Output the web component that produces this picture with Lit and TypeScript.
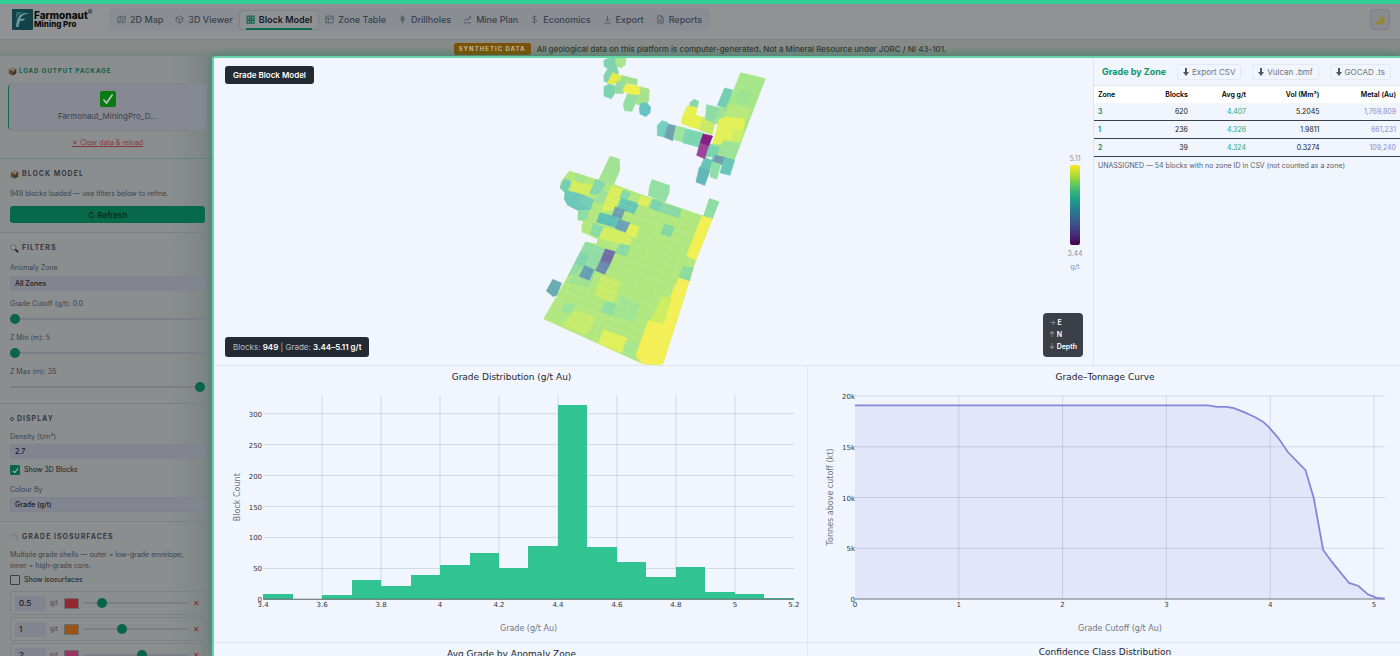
import { LitElement, html, svg, css } from "lit";
import { customElement, property, state } from "lit/decorators.js";
import { classMap } from "lit/directives/class-map.js";

const icons: Record<string, unknown> = {
  map: svg`<path d="M1.5 4v10l4.3-2 4.4 2 4.3-2V2l-4.3 2-4.4-2zM5.8 2v10M10.2 4v10"/>`,
  cube: svg`<path d="M8 1.5l6 3.3v6.4l-6 3.3-6-3.3V4.800zM2 4.800l6 3.400 6-3.400M8 8.200v6.300"/>`,
  grid: svg`<path d="M2 2h5v5H2zM9.500 2h5v5h-5zM2 9.500h5v5H2zM9.500 9.500h5v5h-5z"/>`,
  table: svg`<path d="M1.500 2h13v12h-13zM1.500 6h13M6 6v8"/>`,
  drill: svg`<path d="M8 1v14M5.500 3.500h5M5 6.500h6M5.500 9.500h5M6.500 12.500h3M5.500 3.500v6M10.500 3.500v6"/>`,
  plan: svg`<path d="M1.500 14h13M2.500 10.500l3.500-4 3 2.500 4.500-6M10.500 3h3v3"/>`,
  dollar: svg`<path d="M8 1v14M11.500 4.500C11 3.300 9.700 2.800 8 2.800c-2 0-3.500.9-3.500 2.500 0 3.500 7.200 1.800 7.200 5.300 0 1.700-1.700 2.600-3.700 2.600s-3.400-.8-3.800-2.200"/>`,
  export: svg`<path d="M8 1.500v9M4.500 7.500L8 11l3.500-3.500M2 14.300h12"/>`,
  report: svg`<path d="M3 1.500h6.500L13 5v9.500H3zM9.500 1.500V5H13M5.500 8.500h5M5.500 11.300h5"/>`,
};

const tabs = [
  ["map", "2D Map"], ["cube", "3D Viewer"], ["grid", "Block Model"], ["table", "Zone Table"],
  ["drill", "Drillholes"], ["plan", "Mine Plan"], ["dollar", "Economics"], ["export", "Export"], ["report", "Reports"],
];

const boxIcon = html`<svg class="emoji" viewBox="0 0 16 16" aria-hidden="true">
  <path d="M8 1l6.500 2.800v8.400L8 15l-6.500-2.800V3.800z" fill="#5d4a37"/><path d="M8 1l6.500 2.800L8 6.600 1.500 3.800z" fill="#83705a"/>
  <path d="M8 6.600V15l6.500-2.800V3.800z" fill="#46372a"/><path d="M4.500 2.500l6.500 2.800v3l-1.500.6V6L3.200 3.100z" fill="#a49a89"/></svg>`;

@customElement("site-header")
class SiteHeader extends LitElement {
  @state() active = "Block Model";
  static styles = css`
    :host { display: block; font-family: Inter, sans-serif; color: #2d3440; }
    .bar { display: flex; align-items: center; height: 31px; padding: 0 10px 4px 12px; border-top: 4px solid #2fd095; border-bottom: 1px solid #7f8284; background: #909293; box-sizing: content-box; }
    .brand { display: flex; align-items: center; gap: 1px; color: #0b0d0e; width: 97px; text-decoration: none; }
    .mark { width: 21px; height: 21px; flex: none; }
    .name { font-weight: 800; font-size: 10px; line-height: 10px; }
    .name span { display: block; white-space: nowrap; }
    .name .sub { font-size: 8px; line-height: 9px; }
    .name sup { font-size: 7px; line-height: 0; }
    nav { display: flex; align-items: center; height: 23px; padding: 0 2px; border-radius: 5px; background: #8a8d92; }
    .tab { display: flex; align-items: center; gap: 4px; height: 20px; padding: 0 6px; border: 1px solid transparent; border-width: 1px 0; border-radius: 4px; background: none; color: #394150; font: 500 9px/12px Inter, sans-serif; position: relative; white-space: nowrap; }
    .tab svg { width: 9px; height: 9px; fill: none; stroke: #4b5462; stroke-width: 1.400; }
    .tab.on { background: #8f9295; border: 1px solid #808386; color: #15191c; font-weight: 600; }
    .tab.on svg { stroke: #0b6649; stroke-width: 1.900; }
    .tab.on::after { content: ""; position: absolute; left: 6px; right: 6px; bottom: -1px; height: 2px; background: #0d6a4c; }
    .theme { margin-left: auto; width: 20px; height: 21px; padding: 0; display: grid; place-items: center; border: 1px solid #7f8188; border-radius: 4px; background: #898b90; }
    .theme svg { width: 10px; height: 10px; }
    .notice { display: flex; align-items: center; justify-content: center; gap: 6px; height: 17px; color: #33382a; background: linear-gradient(#868a89 40%, #76867f); font: 500 8px/12px Inter, sans-serif; }
    .badge { padding: 0 5px; border-radius: 2px; background: #7a5208; color: #bfae86; font-size: 6px; font-weight: 800; letter-spacing: 1px; }
  `;
  render() {
    return html`<header class="bar">
        <a class="brand" href="#" aria-label="Farmonaut Mining Pro">
          <svg class="mark" viewBox="0 0 21 21"><rect width="21" height="21" rx="1" fill="#12424a"/>
            <path d="M4 18C5 8 7 5 13 4L18 4c-6 1-9 3-9.500 6L13 9.500 12 11.500 8 12C7 15 6.500 17 6.500 18z" fill="#6f9a98"/><path d="M4 3h8C8 4 5.500 6 4 11z" fill="#2f6a6c"/></svg>
          <span class="name"><span>Farmonaut<sup>®</sup></span><span class="sub">Mining Pro</span></span>
        </a>
        <nav aria-label="Views">
          ${tabs.map(([icon, label]) => html`<button class=${classMap({ tab: true, on: label === this.active })} @click=${() => (this.active = label)}>
            <svg viewBox="0 0 16 16" aria-hidden="true">${icons[icon]}</svg>${label}</button>`)}
        </nav>
        <button class="theme" aria-label="Toggle dark mode"><svg viewBox="0 0 16 16"><path d="M9 1a7.500 7.500 0 1 1-8 10.500A8.500 8.500 0 0 0 9 1z" fill="#94872f"/></svg></button>
      </header>
      <div class="notice"><span class="badge">SYNTHETIC DATA</span><span>All geological data on this platform is computer-generated. Not a Mineral Resource under JORC / NI 43-101.</span></div>`;
  }
}

@customElement("control-panel")
class ControlPanel extends LitElement {
  static styles = css`
    :host { display: block; font: 400 7px/12px Inter, sans-serif; color: #3b424c; background: linear-gradient(90deg, #8b8e8f 80%, #7b8483); overflow: hidden; }
    section { padding: 9px 7px 9px 10px; border-bottom: 1px solid #7c8082; }
    section.load { padding: 9px 5px 10px 8px; border-color: #5d8776; }
    section.filters { padding-bottom: 11px; }
    h2 { display: flex; align-items: center; gap: 3px; height: 12px; margin: 0 0 8px; font-size: 7px; line-height: 12px; font-weight: 700; letter-spacing: 1px; color: #343a43; }
    .load h2 { color: #0b5b43; margin-bottom: 6px; font-size: 6px; gap: 2px; }
    .tight h2 { margin-bottom: 6px; }
    .emoji { width: 9px; height: 9px; flex: none; }
    .file { display: flex; flex-direction: column; align-items: center; gap: 3px; padding: 7px 0 8px; border: 1px solid #80848a; border-left: 1px solid #0d6a4c; border-radius: 5px; background: #868992; font-size: 8px; }
    .file svg { width: 16px; height: 16px; }
    .clear { display: block; margin: 7px auto 0; padding: 0; border: 0; background: none; font: 400 7px/10px Inter, sans-serif; color: #8c3737; text-decoration: underline; }
    p { margin: 0; padding-right: 16px; line-height: 11px; }
    .refresh { width: 100%; height: 17px; margin-top: 7px; padding: 0; display: flex; gap: 2px; align-items: center; justify-content: center; border: 0; border-radius: 3px; background: #08694a; color: #02291d; font: 600 8px/12px Inter, sans-serif; }
    label { display: block; }
    .field { width: 100%; box-sizing: border-box; height: 15px; margin: 2px 0 7px; padding: 0 4px; appearance: none; border: 1px solid #7f838b; border-radius: 2px; background: #82858f; color: #171b22; font: 500 7px/12px Inter, sans-serif; display: block; }
    .tight > .field { margin-top: 1px; }
    input[type="range"] { appearance: none; display: block; width: 100%; height: 10px; margin: 4px 0 8px; background: none; }
    input[type="range"]::-webkit-slider-runnable-track { height: 2px; background: #7b7f84; border-radius: 1px; }
    input[type="range"]::-webkit-slider-thumb { appearance: none; width: 10px; height: 10px; margin-top: -4px; border-radius: 50%; background: #086648; }
    section > .field:last-child, section > input[type="range"]:last-child { margin-bottom: 0; }
    .check { display: flex; align-items: center; gap: 4px; color: #171b22; line-height: 12px; }
    .field + .check { margin: -2px 0 8px; }
    p + .check { margin-top: 3px; }
    .check input { appearance: none; display: grid; place-items: center; box-sizing: border-box; width: 10px; height: 10px; margin: 0; border: 1px solid #3c4045; border-radius: 1px; }
    .check input:checked { background: #08664a; border-color: #08664a; }
    .check input:checked::before { content: ""; width: 2px; height: 5px; border: solid #aeb4b2; border-width: 0 1px 1px 0; transform: rotate(40deg); }
    .shells { display: grid; gap: 2px; margin-top: 5px; }
    .shell { display: grid; grid-template-columns: 31px 10px 15px 1fr 8px; align-items: center; gap: 4px; height: 24px; box-sizing: border-box; padding: 0 4px; border: 1px solid #7e8184; border-radius: 3px; font-size: 6px; }
    .shell .field, .shell input[type="range"] { margin: 0; }
    .shell .field { border: 0; font-size: 8px; padding: 0 4px; }
    .shell input[type="color"] { appearance: none; width: 15px; height: 11px; padding: 0; border: 1px solid #6a6e70; background: none; display: block; }
    .shell input[type="color"]::-webkit-color-swatch-wrapper { padding: 0; }
    .shell input[type="color"]::-webkit-color-swatch { border: 0; }
    .shell button { padding: 0; border: 0; background: none; color: #90242a; font: 500 8px/10px Inter, sans-serif; }
  `;
  slider(id: string, label: string, min: number, max: number, value: number) {
    return html`<label for=${id}>${label}</label><input id=${id} type="range" min=${min} max=${max} .value=${String(value)}>`;
  }
  render() {
    const shells = [["0.5", "#94282e", 15], ["1", "#9c5316", 36], ["2", "#963566", 57]];
    return html`
      <section class="load">
        <h2>${boxIcon} LOAD OUTPUT PACKAGE</h2>
        <div class="file"><svg viewBox="0 0 16 16" aria-hidden="true"><rect width="16" height="16" rx="2" fill="#087b13"/><path d="M3.500 8.500l3 3.500L12.500 3.500" fill="none" stroke="#b5c2b7" stroke-width="1.800"/></svg><span>Farmonaut_MiningPro_D...</span></div>
        <button class="clear">✕ Clear data &amp; reload</button>
      </section>
      <section>
        <h2>${boxIcon} BLOCK MODEL</h2>
        <p>949 blocks loaded — use filters below to refine.</p>
        <button class="refresh"><span>↻</span>Refresh</button>
      </section>
      <section class="filters">
        <h2><svg class="emoji" viewBox="0 0 16 16"><circle cx="6" cy="6" r="4.500" fill="#969b9c" stroke="#555b5d" stroke-width="1.500"/><path d="M9.500 9.500l5 5" stroke="#1e2123" stroke-width="3"/></svg> FILTERS</h2>
        <label for="zone">Anomaly Zone</label>
        <select id="zone" class="field"><option>All Zones</option><option>1</option><option>2</option><option>3</option></select>
        ${this.slider("cut", "Grade Cutoff (g/t): 0.0", 0, 5, 0)}
        ${this.slider("zmin", "Z Min (m): 5", 5, 35, 5)}
        ${this.slider("zmax", "Z Max (m): 35", 5, 35, 35)}
      </section>
      <section class="tight">
        <h2><svg width="4" height="6" viewBox="0 0 4 6" fill="none" stroke="#3b4148"><circle cx="2" cy="3" r="1.500"/></svg> DISPLAY</h2>
        <label for="density">Density (t/m³)</label>
        <input id="density" class="field" value="2.7">
        <label class="check"><input type="checkbox" checked>Show 3D Blocks</label>
        <label for="colour">Colour By</label>
        <select id="colour" class="field"><option>Grade (g/t)</option></select>
      </section>
      <section class="tight">
        <h2><svg class="emoji" viewBox="0 0 16 16" fill="none" stroke="#73777a" stroke-width="1.500"><path d="M2 4l5-2 5 2v6l-2 1M2 4v5M7 8l3 3M13 13h2"/></svg> GRADE ISOSURFACES</h2>
        <p>Multiple grade shells — outer = low-grade envelope, inner = high-grade core.</p>
        <label class="check"><input type="checkbox">Show isosurfaces</label>
        <div class="shells">${shells.map(([v, c, p]) => html`<div class="shell">
          <input class="field" aria-label="Shell grade" .value=${v}><span>g/t</span>
          <input type="color" aria-label="Shell colour" .value=${c}>
          <input type="range" aria-label="Shell opacity" min="0" max="100" .value=${String(p)}>
          <button aria-label="Remove shell">✕</button></div>`)}</div>
      </section>`;
  }
}

/* Visible block faces, back to front: fill colour and outline. */
const upperBlocks: [string, string][] = [
  ["#7fd3ae", "222,12 256,0 262,36 248,42 236,40 222,30"], ["#a9e48f", "256,0 288,6 286,26 272,36 258,28"],
  ["#83d2b2", "232,40 262,38 266,50 258,66 238,82 222,76 222,58"], ["#9fe08e", "272,58 322,70 320,88 308,84 280,82 262,84"],
  ["#e4ec4a", "248,50 274,60 262,84 232,82"], ["#7fd4b0", "222,92 238,84 256,90 256,110 244,128 222,120"],
  ["#95dba4", "262,76 288,84 280,112 258,112 256,92"], ["#a8e38c", "330,92 358,100 356,136 340,150 318,144 322,112"],
  ["#92dea3", "296,106 328,116 316,142 306,166 284,164 280,144"], ["#eff04c", "288,84 330,92 328,116 300,114 278,104"],
  ["#66c5c2", "332,142 350,140 362,154 360,170 348,182 330,174 328,158"],
  ["#74cfbe", "382,208 396,194 414,200 404,244 382,238"], ["#6fa3b4", "414,204 438,210 428,254 404,244"],
  ["#9fe3a0", "438,210 466,216 458,258 430,250"], ["#7cd6b0", "466,218 522,232 508,274 458,260"],
  ["#86d8ac", "480,140 492,130 506,136 502,156 478,154"],
  ["#e6f04e", "472,150 500,154 498,178 518,184 508,220 480,212 454,202 456,186"],
  ["#c8ea68", "518,184 540,192 556,196 546,236 508,222"], ["#8edca4", "530,146 572,156 556,204 526,188"],
  ["#74cfb2", "584,96 608,102 600,138 588,158 562,148"], ["#9fe39a", "572,154 592,156 572,206 550,200"],
  ["#a6e68a", "632,50 706,68 612,312 540,286 548,262"], ["#9ae492", "632,104 662,112 650,142 620,134"],
  ["#b8e97c", "594,144 664,160 640,210 590,190"],
  ["#e2f158", "588,182 622,188 640,186 644,204 634,240 610,262 548,264 568,190"],
  ["#cdee66", "612,220 642,226 628,262 600,256"], ["#9ee498", "580,254 632,262 612,312 568,292"],
  ["#7cd6ac", "540,264 568,274 562,302 526,302"], ["#7fc9b0", "550,294 586,304 578,326 544,316"],
  ["#6f9fae", "556,298 584,304 576,326 550,316"], ["#69c6b8", "584,304 614,312 600,358 570,350"],
  ["#66c7b4", "524,304 548,314 538,346 510,336"], ["#90dfa6", "546,318 572,326 560,370 540,362"],
  ["#62b8b8", "508,334 540,344 524,388 498,378"],
  ["#861c84", "520,234 548,240 536,270 510,262"], ["#9c469b", "510,262 536,270 524,308 500,298"],
];
const bodyOutline = "118,-73 206,-45 240,-117 268,-109 270,-75 252,-32 350,4 520,62 538,10 568,20 498,196 478,260 400,505 388,510 340,508 40,372 110,250 166,140 200,146 202,132 156,112 154,92 160,80 142,74 144,48 112,30 102,12 104,-8 90,-20 92,-38 100,-50";
const bodyBlocks: [string, string][] = [
  ["#a0e394", "240,-117 268,-109 270,-75 252,-32 196,-46"], ["#a4e48e", "212,-62 256,-48 248,-30 200,-44"],
  ["#8edca4", "538,10 568,20 548,72 520,62"], ["#76cfb4", "90,-24 104,-48 126,-40 112,-14 96,-6"],
  ["#a8e58a", "140,-66 168,-58 158,-34 132,-44"], ["#d4ed5f", "126,-44 142,-38 156,-34 196,-30 178,2 120,-14"],
  ["#6cc8b8", "106,-14 160,0 190,16 180,44 146,46 112,32 102,12"], ["#84d6ac", "198,-46 226,-36 214,-10 196,-2 178,-4"],
  ["#9ce09a", "214,-14 244,-4 226,30 192,18"], ["#74cdb4", "160,2 190,14 180,40 148,30"],
  ["#8bdca8", "144,48 176,46 170,72 146,76"], ["#d8ef5a", "246,-28 278,-18 254,42 214,50 228,10"],
  ["#82d8aa", "280,-14 302,-6 290,14 270,6"], ["#66c6b6", "274,10 326,26 312,56 264,40"],
  ["#dcef5c", "332,2 362,12 352,36 322,26"], ["#6f9fae", "256,36 284,46 274,72 246,64"],
  ["#5cc0b4", "210,54 246,62 274,74 262,98 200,82"], ["#6a9fb4", "268,74 300,84 286,112 256,100"],
  ["#e2f056", "300,88 328,96 316,128 286,118"], ["#d3ee60", "230,98 290,116 306,134 294,152 200,128 214,104"],
  ["#8adca4", "190,84 220,96 206,128 182,116"], ["#78d3ae", "370,12 396,22 388,50 360,38"],
  ["#88daa4", "396,24 454,42 446,68 388,50"], ["#82d8a4", "404,88 432,96 422,126 392,116"],
  ["#88dba2", "272,146 300,154 290,184 256,174"], ["#90dda4", "166,140 224,162 206,206 188,226 122,240 110,250"],
  ["#80d5aa", "150,172 176,182 162,214 134,204"], ["#a0e292", "160,212 200,222 176,276 110,262"],
  ["#6f6fa6", "226,162 256,170 240,208 210,200"], ["#6b8cb0", "210,200 240,208 224,238 196,226"],
  ["#659fb6", "164,212 192,224 178,256 148,244"], ["#c8ec6a", "214,240 274,262 250,322 194,300"],
  ["#f2f050", "516,64 552,72 498,196 470,182 482,150"], ["#8cdc9e", "460,214 500,222 478,260 448,246"],
  ["#f3ef55", "446,250 482,260 402,510 388,512 340,510 318,480 356,376 388,384 426,294"],
  ["#cdee60", "396,306 424,312 400,386 362,376"], ["#a0e592", "272,300 328,330 316,380 280,370 254,362"],
  ["#8fdfa0", "228,318 258,328 250,362 212,350"], ["#dff05a", "220,404 292,430 280,476 206,446"],
  ["#a6e690", "288,438 324,450 312,490 276,476"], ["#9be39a", "110,322 134,330 124,358 92,344"],
  ["#c6ec6c", "134,344 196,366 170,420 100,392"],
];

@customElement("block-view")
class BlockView extends LitElement {
  static styles = css`
    :host { display: block; position: relative; overflow: hidden; font: 500 8px/12px Inter, sans-serif; }
    .scene { display: block; width: 100%; height: 100%; }
    .chip { position: absolute; left: 11px; padding: 0 8px; border-radius: 3px; background: #242a32; color: #fff; font-weight: 600; line-height: 18px; }
    .name { top: 8px; }
    .stats { bottom: 8px; line-height: 20px; color: #b9bec6; font-weight: 400; }
    .stats b { color: #fff; font-weight: 600; }
    .scale { position: absolute; right: 8px; top: 95px; width: 20px; display: flex; flex-direction: column; align-items: center; color: #8d929c; font-size: 7px; line-height: 12px; font-weight: 400; }
    .ramp { width: 10px; height: 80px; margin-bottom: 3px; border-radius: 2px; background: linear-gradient(#fde725, #a0da39 15%, #4ac16d 28%, #1fa187 42%, #277f8e 55%, #365c8d 70%, #46327e 85%, #440154); }
    .scale span + span { margin-top: 1px; }
    .axes { position: absolute; right: 10px; bottom: 8px; padding: 4px 6px; border-radius: 4px; background: #3a3f48; color: #fff; font-size: 7px; line-height: 12px; font-weight: 600; }
    .axes div { white-space: nowrap; }
    .axes i { font-style: normal; font-weight: 400; color: #a6abb3; }
  `;
  render() {
    const rows = Array.from({ length: 24 }, (_, i) => {
      const t = (i - 4) / 18;
      return svg`<path d="M${40 + 170 * t} ${372 - 417 * t}L${400 + 160 * t} ${520 - 458 * t}"/>`;
    });
    const cols = Array.from({ length: 17 }, (_, i) => {
      const t = (i - 4) / 12;
      return svg`<path d="M${40 + 360 * t} ${372 + 148 * t}L${210 + 350 * t} ${-55 + 110 * t}"/>`;
    });
    const face = ([c, p]: [string, string]) => svg`<polygon fill=${c} stroke=${c} stroke-width="2" stroke-linejoin="round" points=${p}/>`;
    return html`<svg class="scene" viewBox="0 0 879 307" role="img" aria-label="Grade block model">
        <g transform="translate(316 -2) scale(.3333)">${upperBlocks.map(face)}</g>
        <g transform="translate(316 137) scale(.3333)">
          <clipPath id="body"><polygon points=${bodyOutline}/></clipPath>
          <polygon fill="#94dfa3" points="366,-47 420,-29 418,-5 404,24 354,2 358,-28"/>
          <polygon fill="#68adb4" points="68,252 96,264 82,300 70,306 48,288"/>
          <polygon fill="#b1e77f" points=${bodyOutline}/>
          <g clip-path="url(#body)">${bodyBlocks.map(face)}
            <g stroke="#fff" stroke-opacity=".12" stroke-width="2">${rows}${cols}</g></g>
        </g>
      </svg>
      <div class="chip name">Grade Block Model</div>
      <div class="chip stats">Blocks: <b>949</b> | Grade: <b>3.44–5.11 g/t</b></div>
      <div class="scale"><span>5.11</span><div class="ramp"></div><span>3.44</span><span>g/t</span></div>
      <div class="axes"><div><i>→</i> E</div><div><i>↑</i> N</div><div><i>↓</i> Depth</div></div>`;
  }
}

@customElement("zone-table")
class ZoneTable extends LitElement {
  static styles = css`
    :host { display: block; border-left: 1px solid #e0e4ee; font: 400 8px/12px Inter, sans-serif; color: #14171c; min-width: 0; }
    .head { display: flex; align-items: center; justify-content: space-between; height: 28px; padding: 0 9px 0 8px; border-bottom: 1px solid #e2e6ef; box-sizing: border-box; }
    h2 { margin: 0; color: #0f9467; font-size: 9px; font-weight: 700; }
    .head button { height: 16px; padding: 0 5px; border: 1px solid #e4e8f2; border-radius: 3px; background: none; color: #6d737e; font: 400 8px/12px Inter, sans-serif; white-space: nowrap; display: flex; align-items: center; gap: 3px; }
    .head svg { width: 6px; height: 8px; }
    table { width: 100%; border-collapse: collapse; }
    th, td { text-align: right; padding: 3px 4px 2px; line-height: 12px; }
    th { font-weight: 600; font-size: 7px; background: #fff; padding: 3px; padding-right: 4px; color: #000; line-height: 11px; }
    th:first-child, td:first-child { text-align: left; padding-left: 4px; }
    td { border-bottom: 1px solid #3d4047; font-size: 7px; }
    td.zone { color: #12855f; font-weight: 600; }
    td.avg { color: #27a878; }
    td.metal { color: #8d8acb; }
    p { margin: 0; padding: 3px 4px; font-size: 7px; line-height: 12px; color: #5a606b; }
    .c1 { width: 12%; } .c2 { width: 20%; } .c3 { width: 19%; } .c4 { width: 24%; } .c5 { width: 25%; }
  `;
  render() {
    const rows = [["3", "620", "4.407", "5.2045", "1,769,809"], ["1", "236", "4.326", "1.9811", "661,231"], ["2", "39", "4.324", "0.3274", "109,240"]];
    return html`<div class="head"><h2>Grade by Zone</h2>
        ${["Export CSV", "Vulcan .bmf", "GOCAD .ts"].map((t) => html`<button><svg viewBox="0 0 6 8" aria-hidden="true"><path d="M2 0h2v4h2L3 8 0 4h2z" fill="#50565f"/></svg>${t}</button>`)}</div>
      <table><colgroup><col class="c1"><col class="c2"><col class="c3"><col class="c4"><col class="c5"></colgroup>
        <thead><tr><th>Zone</th><th>Blocks</th><th>Avg g/t</th><th>Vol (Mm³)</th><th>Metal (Au)</th></tr></thead>
        <tbody>${rows.map((r) => html`<tr><td class="zone">${r[0]}</td><td>${r[1]}</td><td class="avg">${r[2]}</td><td>${r[3]}</td><td class="metal">${r[4]}</td></tr>`)}</tbody></table>
      <p>UNASSIGNED — 54 blocks with no zone ID in CSV (not counted as a zone)</p>`;
  }
}

@customElement("plot-chart")
class PlotChart extends LitElement {
  @property() kind = "";
  @property() heading = "";
  static styles = css`
    :host { display: block; min-width: 0; font-family: "DejaVu Sans", sans-serif; }
    figure { margin: 0; }
    figcaption { padding: 5px 0 0 2px; text-align: center; font-size: 9px; line-height: 12px; color: #22262f; }
    :host(.low) figcaption { padding-top: 3px; }
    svg { display: block; width: 100%; }
    .tick { font-size: 7px; fill: #33363d; }
    .title { font-size: 8px; fill: #6f7580; text-anchor: middle; }
    .mid { text-anchor: middle; }
    .end { text-anchor: end; }
    .lines path { stroke: #2a3f5f; stroke-opacity: .15; }
  `;
  histogram() {
    const counts = [8, 0, 7, 32, 22, 40, 55, 75, 50, 86, 314, 84, 60, 36, 53, 12, 8, 3];
    const x = (v: number) => 49 + (v - 3.4) * 294.4;
    const y = (v: number) => 216 - v * 0.618;
    const xs = [3.4, 3.6, 3.8, 4, 4.2, 4.4, 4.6, 4.8, 5, 5.2];
    return svg`<g class="lines">${xs.slice(1, 9).map((v) => svg`<path d="M${x(v)} 12V216"/>`)}
        ${[50, 100, 150, 200, 250, 300].map((v) => svg`<path d="M49 ${y(v)}H579"/>`)}</g>
      <g fill="#32c392" shape-rendering="crispEdges">${counts.map((c, i) => svg`<rect x=${x(3.4 + i / 10)} y=${y(c)} width="29.440" height=${c * 0.618}/>`)}</g>
      <path d="M49 216H579" stroke="#55605f"/>
      ${[0, 50, 100, 150, 200, 250, 300].map((v) => svg`<text class="tick end" x="48" y=${y(v) + 3}>${v}</text>`)}
      ${xs.map((v) => svg`<text class="tick mid" x=${x(v)} y="224">${v}</text>`)}
      <text class="title" x="314" y="248">Grade (g/t Au)</text>
      <text class="title" transform="translate(26 114) rotate(-90)">Block Count</text>`;
  }
  tonnage() {
    const pts = [[0, 19.08], [3.4, 19.08], [3.49, 18.92], [3.58, 18.92], [3.65, 18.8], [3.76, 18.36], [3.85, 17.93], [3.93, 17.47], [3.99, 16.9], [4.08, 15.83], [4.17, 14.48], [4.34, 12.7], [4.42, 9.92], [4.51, 4.83], [4.6, 3.58], [4.76, 1.58], [4.85, 1.28], [4.94, 0.46], [5.02, 0.13], [5.1, 0.03]];
    const x = (v: number) => 47 + v * 103.8;
    const y = (v: number) => 216 - v * 10.15;
    const line = pts.map(([a, b]) => `${x(a)},${y(b)}`).join(" ");
    return svg`<polygon fill="#e3e6fa" points="47,216 ${line}"/>
      <g class="lines">${[1, 2, 3, 4, 5].map((v) => svg`<path d="M${x(v)} 13V216"/>`)}
        ${[5, 10, 15, 20].map((v) => svg`<path d="M47 ${y(v)}H577"/>`)}</g>
      <path d="M47 216H577" stroke="#74767f"/>
      <polyline fill="none" stroke="#8487d9" stroke-width="1.800" points=${line}/>
      ${[0, 5, 10, 15, 20].map((v) => svg`<text class="tick end" x="47" y=${y(v) + 3}>${v ? v + "k" : "0"}</text>`)}
      ${[0, 1, 2, 3, 4, 5].map((v) => svg`<text class="tick mid" x=${x(v)} y="224">${v}</text>`)}
      <text class="title" x="312" y="248">Grade Cutoff (g/t Au)</text>
      <text class="title" transform="translate(25 114) rotate(-90)">Tonnes above cutoff (kt)</text>`;
  }
  render() {
    return html`<figure><figcaption>${this.heading}</figcaption>
      <svg viewBox="0 0 592 259" role="img" aria-label=${this.heading}>${this.kind === "histogram" ? this.histogram() : this.kind === "tonnage" ? this.tonnage() : ""}</svg></figure>`;
  }
}

@customElement("app-root")
class AppRoot extends LitElement {
  static styles = css`
    :host { display: grid; grid-template: auto minmax(0, 1fr) / 212px minmax(0, 1fr); height: 100vh; overflow: hidden; background: #8b8e8f; }
    site-header { grid-column: 1 / -1; height: 56px; }
    main { position: relative; overflow: hidden; border: solid #62d3a4; border-width: 2px 0 0 2px; background: #f1f5fd; box-shadow: 0 0 10px #15805c90; border-top-left-radius: 3px; }
    .top { display: grid; grid-template-columns: minmax(0, 879fr) minmax(0, 307fr); height: 307px; }
    .charts { display: grid; grid-template-columns: 1fr 1fr; }
    .charts plot-chart { border-top: 1px solid #e0e4ec; }
    .charts plot-chart:nth-child(even) { border-left: 1px solid #e3e7f0; }
  `;
  render() {
    return html`<site-header></site-header><control-panel></control-panel>
      <main>
        <div class="top"><block-view></block-view><zone-table></zone-table></div>
        <div class="charts">
          <plot-chart kind="histogram" heading="Grade Distribution (g/t Au)"></plot-chart>
          <plot-chart kind="tonnage" heading="Grade–Tonnage Curve"></plot-chart>
          <plot-chart heading="Avg Grade by Anomaly Zone"></plot-chart>
          <plot-chart class="low" heading="Confidence Class Distribution"></plot-chart>
        </div>
      </main>`;
  }
}
